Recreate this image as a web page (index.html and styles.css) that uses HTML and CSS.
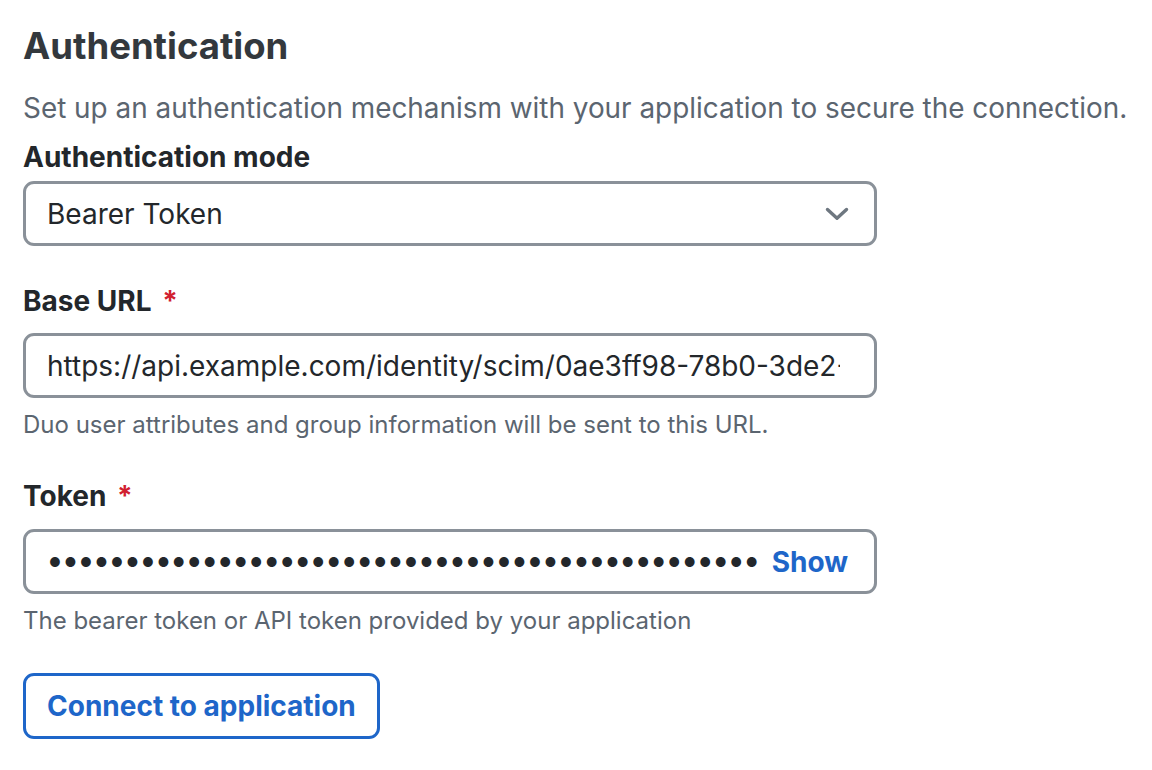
FILE: index.html
```html
<!DOCTYPE html>
<html>
<head>
<meta charset="utf-8">
<link rel="stylesheet" href="styles.css">
</head>
<body>
<main class="panel">
  <h1 class="title">Authentication</h1>
  <p class="desc">Set up an authentication mechanism with your application to secure the connection.</p>

  <div class="field first">
    <label class="label">Authentication mode</label>
    <div class="control select">
      <span class="value">Bearer Token</span>
      <svg class="chev" width="24" height="14" viewBox="0 0 24 14"><path d="M2.5 2.5 L12 11.2 L21.5 2.5" fill="none" stroke="#6e7780" stroke-width="3.4" stroke-linecap="round" stroke-linejoin="round"/></svg>
    </div>
  </div>

  <div class="field second">
    <label class="label">Base URL <span class="req">*</span></label>
    <div class="control url">
      <span class="value">https://api.example.com/identity/scim/0ae3ff98-78b0-3de2-4c1a-8e7f</span>
    </div>
    <p class="help">Duo user attributes and group information will be sent to this URL.</p>
  </div>

  <div class="field third">
    <label class="label">Token <span class="req">*</span></label>
    <div class="control token">
      <span class="dots">●●●●●●●●●●●●●●●●●●●●●●●●●●●●●●●●●●●●●●●●●●●●●●</span>
      <span class="show">Show</span>
    </div>
    <p class="help">The bearer token or API token provided by your application</p>
  </div>

  <button class="btn">Connect to application</button>
</main>
</body>
</html>
```

FILE: styles.css
```css
html, body {
  margin: 0;
  padding: 0;
  background: #ffffff;
}
body {
  font-family: Inter, "Noto Sans", sans-serif;
  color: #23272b;
}
.panel {
  padding: 22px 23px 0 23px;
  width: 1110px;
}
.title {
  margin: 0;
  font-size: 36.5px;
  font-weight: 700;
  line-height: 48px;
  color: #33383d;
}
.desc {
  margin: 18px 0 0 0;
  font-size: 27.9px;
  line-height: 40px;
  color: #5b6570;
  white-space: nowrap;
}
.field {
  display: flex;
  flex-direction: column;
  width: 854px;
}
.field.first { margin-top: 9px; }
.field.second { margin-top: 35px; }
.field.third { margin-top: 35px; }
.label {
  font-size: 28px;
  font-weight: 700;
  line-height: 40px;
  color: #23272b;
}
.req {
  color: #d1202f;
  margin-left: 4px;
}
.control {
  margin-top: 12px;
  box-sizing: border-box;
  height: 65px;
  border: 3px solid #8a9199;
  border-radius: 11px;
  display: flex;
  align-items: center;
  padding: 0 25px 0 21px;
  overflow: hidden;
}
.first .control { margin-top: 4px; }
.third .control { margin-top: 13px; }
.url { padding-right: 34px; }
.token { padding-right: 26px; }
.value {
  font-size: 28px;
  color: #23272b;
  white-space: nowrap;
  flex: 1;
  min-width: 0;
  overflow: hidden;
}
.chev {
  flex: none;
}
.dots {
  flex: none;
  font-size: 13px;
  letter-spacing: 3.6px;
  color: #23272b;
  padding-left: 2px;
  white-space: nowrap;
}
.show {
  flex: none;
  font-size: 28px;
  font-weight: 700;
  color: #1e66c9;
  margin-left: auto;
}
.help {
  margin: 11px 0 0 0;
  font-size: 24px;
  line-height: 32px;
  color: #5b6570;
  white-space: nowrap;
}
.btn {
  margin-top: 36px;
  box-sizing: border-box;
  height: 66px;
  padding: 0 21px;
  background: #fff;
  border: 3px solid #1e66c9;
  border-radius: 11px;
  font-family: Inter, "Noto Sans", sans-serif;
  font-size: 28px;
  font-weight: 700;
  color: #1e66c9;
}
```
